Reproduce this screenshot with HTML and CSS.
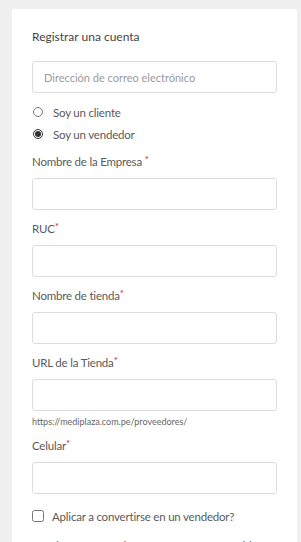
FILE: index.html
```html
<!DOCTYPE html>
<html lang="es">

<head>
  <meta charset="UTF-8" />
  <meta name="viewport" content="width=device-width, initial-scale=1.0" />
  <title>Registrar una cuenta</title>
  <link rel="stylesheet" href="styles.css">
</head>

<body>
  <div class="register-card">
    <h2 class="register-title">Registrar una cuenta</h2>

    <input type="email" class="field-input" placeholder="Dirección de correo electrónico" />

    <div class="role-options">
      <label class="role-option">
        <input type="radio" name="role" value="customer" />
        <span>Soy un cliente</span>
      </label>
      <label class="role-option">
        <input type="radio" name="role" value="vendor" checked />
        <span>Soy un vendedor</span>
      </label>
    </div>

    <div class="field-group">
      <label class="field-label">Nombre de la Empresa <span class="required">*</span></label>
      <input type="text" class="field-input" />
    </div>

    <div class="field-group">
      <label class="field-label">RUC<span class="required">*</span></label>
      <input type="text" class="field-input" />
    </div>

    <div class="field-group">
      <label class="field-label">Nombre de tienda<span class="required">*</span></label>
      <input type="text" class="field-input" />
    </div>

    <div class="field-group">
      <label class="field-label">URL de la Tienda<span class="required">*</span></label>
      <input type="text" class="field-input" />
      <small class="field-hint">https://mediplaza.com.pe/proveedores/</small>
    </div>

    <div class="field-group">
      <label class="field-label">Celular<span class="required">*</span></label>
      <input type="text" class="field-input" />
    </div>

    <label class="apply-option">
      <input type="checkbox" />
      <span>Aplicar a convertirse en un vendedor?</span>
    </label>

    <p class="privacy-text">Sus datos personales se usarán para respaldar su experiencia en este sitio web.</p>
  </div>
</body>

</html>
```

FILE: styles.css
```css
body {
  font-family: Lato, "Open Sans", sans-serif;
  background: #f0f0f0;
  margin: 0;
  padding: 0;
  color: #5a5a5a;
}

.register-card {
  background: #fff;
  margin: 9px 4px 0 12px;
  padding: 20px 20px 10px;
  border-radius: 3px;
}

.register-title {
  margin: 0 0 16px;
  font-size: 12px;
  font-weight: normal;
  line-height: 16px;
  color: #444;
}

.field-input {
  display: block;
  box-sizing: border-box;
  width: 100%;
  height: 32px;
  margin: 0;
  padding: 0 11px;
  border: 1px solid #ddd;
  border-radius: 3px;
  font-family: inherit;
  font-size: 11px;
  color: #555;
  background: #fff;
}

.field-input::placeholder {
  color: #9a9a9a;
}

.role-options {
  margin: 8px 0 9px;
}

.role-option,
.apply-option {
  display: flex;
  align-items: center;
  height: 22px;
  font-size: 11.5px;
  letter-spacing: -0.2px;
  color: #5a5a5a;
}

.role-option input {
  width: 10px;
  height: 10px;
  margin: 0 10px 0 1px;
  accent-color: #333;
}

.field-group {
  margin-bottom: 11px;
}

.field-label {
  display: block;
  font-size: 11.5px;
  letter-spacing: -0.2px;
  line-height: 16px;
  margin-bottom: 8px;
  color: #5a5a5a;
}

.required {
  color: #e4141b;
  font-size: 10px;
  vertical-align: top;
  line-height: 10px;
}

.field-hint {
  display: block;
  margin-top: 5px;
  font-size: 9px;
  color: #666;
}

.apply-option {
  margin-top: 3px;
}

.apply-option input {
  width: 12px;
  height: 12px;
  margin: 0 8px 0 0;
}

.privacy-text {
  margin: 10px 0 0;
  font-size: 11.5px;
  line-height: 18px;
  color: #5a5a5a;
}
```
